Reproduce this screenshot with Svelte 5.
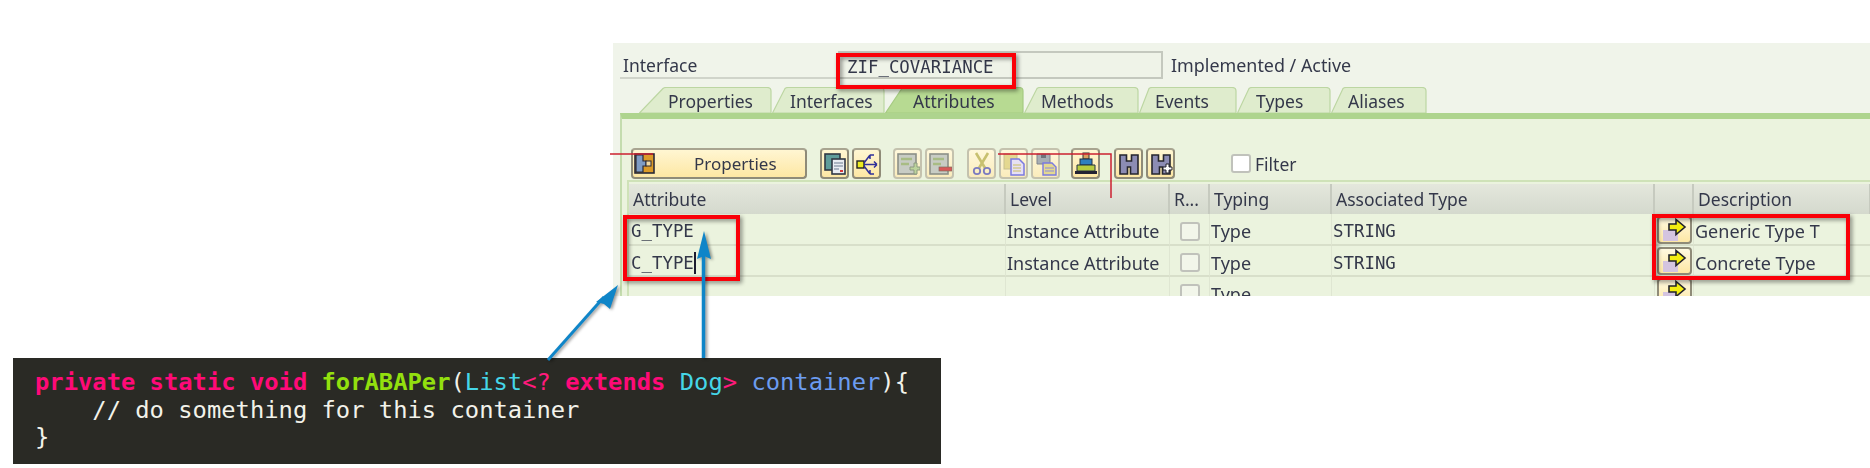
<script lang="ts">
  const tabs = [
    { label: "Properties", width: 133, slant: 24, pad: 29 },
    { label: "Interfaces", width: 113, slant: 13, pad: 18 },
    { label: "Attributes", width: 139, slant: 17, pad: 28, active: true },
    { label: "Methods", width: 115, slant: 13, pad: 17 },
    { label: "Events", width: 98, slant: 10, pad: 16 },
    { label: "Types", width: 94, slant: 12, pad: 19 },
    { label: "Aliases", width: 96, slant: 12, pad: 17 },
  ];

  const columns = ["Attribute", "Level", "R...", "Typing", "Associated Type", "", "Description"];

  const rows = [
    { name: "G_TYPE", level: "Instance Attribute", typing: "Type", assoc: "STRING", desc: "Generic Type T" },
    { name: "C_TYPE", level: "Instance Attribute", typing: "Type", assoc: "STRING", desc: "Concrete Type", cursor: true },
    { name: "", level: "", typing: "Type", assoc: "", desc: "" },
  ];

  const groups = [
    { icons: ["copy", "tree"], after: 12 },
    { icons: ["add", "remove"], after: 13, off: true },
    { icons: ["cut", "paste", "save"], after: 11, off: true },
    { icons: ["stack"], after: 14 },
    { icons: ["find", "findnext"], after: 0 },
  ];
</script>

<div class="stage">
  <section class="sap">
    <div class="head">
      <span class="head-label">Interface</span>
      <span class="field mono">ZIF_COVARIANCE</span>
      <span class="status">Implemented / Active</span>
    </div>

    <div class="tabs">
      {#each tabs as tab}
        <div class="tab" class:active={tab.active} style="width: {tab.width}px; padding-left: {tab.pad}px">
          <svg class="tab-bg" width={tab.width} height="26" aria-hidden="true">
            <path d="M0.5 26 L{tab.slant} 1.5 Q{tab.slant + 1} 0.5 {tab.slant + 3} 0.5 L{tab.width - 5} 0.5 Q{tab.width - 1} 0.5 {tab.width - 1} 4 L{tab.width - 1} 26 Z" />
          </svg>
          <span>{tab.label}</span>
        </div>
      {/each}
    </div>

    <div class="panel">
      <div class="toolbar">
        <button class="btn wide">
          <svg width="21" height="21" viewBox="0 0 21 21" aria-hidden="true">
            <rect x="1" y="1" width="19" height="19" fill="#dc9a28" stroke="#2a2a38" stroke-width="1.6" />
            <path d="M2 2h7v6h3v5H9v6H2z" fill="#7f9cc4" stroke="#2a2a38" stroke-width="1.2" />
            <rect x="12" y="8" width="5" height="5" fill="#f2d9a0" stroke="#2a2a38" />
          </svg>
          <span>Properties</span>
        </button>

        {#each groups as group}
          <div class="group" style="margin-right: {group.after}px">
            {#each group.icons as icon}
              <button class="btn icon" class:off={group.off}>
                <svg width="24" height="24" viewBox="0 0 24 24" aria-hidden="true">
                  {#if icon === "copy"}
                    <rect x="2" y="2" width="15" height="16" fill="#5f9c9a" stroke="#303844" stroke-width="1.6" />
                    <rect x="9" y="7" width="13" height="15" fill="#e8ecf2" stroke="#303844" stroke-width="1.6" />
                    <path d="M11 11h9M11 14h9M11 17h5" stroke="#6a7a90" />
                    <rect x="17" y="18" width="3" height="2" fill="#d8383a" />
                  {:else if icon === "tree"}
                    <rect x="2" y="9" width="7" height="7" fill="#ecec20" stroke="#222" stroke-width="1.4" />
                    <path d="M9 12.5H22M9 11L15 3M9 14l6 8M15 3h4M15 3v4M15 22h4M15 22v-4M22 12.5l-3-3M22 12.5l-3 3" fill="none" stroke="#30309a" stroke-width="1.5" />
                  {:else if icon === "add"}
                    <rect x="2" y="2" width="18" height="20" fill="#c8ccc4" stroke="#8c9088" stroke-width="1.6" />
                    <path d="M5 7h11M5 12h8" stroke="#a8bc84" stroke-width="2.5" />
                    <path d="M14 15h4v-4h3v4h3v3h-3v4h-3v-4h-4z" fill="#bcd49c" stroke="#8c9a80" />
                  {:else if icon === "remove"}
                    <rect x="2" y="2" width="18" height="20" fill="#c8ccc4" stroke="#8c9088" stroke-width="1.6" />
                    <path d="M5 7h11M5 12h8" stroke="#a8bc84" stroke-width="2.5" />
                    <rect x="11" y="15" width="13" height="4" fill="#d85858" stroke="#807060" stroke-width=".7" />
                  {:else if icon === "cut"}
                    <path d="M6 1l9 15M18 1L9 16" stroke="#c8c070" stroke-width="2.6" fill="none" />
                    <circle cx="7" cy="19" r="3.2" fill="none" stroke="#7c7cc0" stroke-width="1.8" />
                    <circle cx="17" cy="19" r="3.2" fill="none" stroke="#7c7cc0" stroke-width="1.8" />
                  {:else if icon === "paste"}
                    <rect x="2" y="2" width="13" height="15" fill="#e4d890" stroke="#c8c090" />
                    <path d="M9 7h8l5 5v11H9z" fill="#e6e0f4" stroke="#7a7ae0" stroke-width="1.5" />
                    <path d="M11 13h8M11 16h8M11 19h8" stroke="#c8bc60" />
                  {:else if icon === "save"}
                    <path d="M3 2h13v10H3z" fill="#a8aeb4" stroke="#80848c" />
                    <rect x="7" y="2" width="5" height="4" fill="#70747c" />
                    <path d="M9 11h9l4 4v8H9z" fill="#e4d890" stroke="#7a7ae0" stroke-width="1.4" />
                    <path d="M11 16h9M11 19h9" stroke="#8a8ae0" />
                  {:else if icon === "stack"}
                    <rect x="9" y="1" width="6" height="6" fill="#d8a060" stroke="#333" />
                    <rect x="6" y="7" width="12" height="6" fill="#2f7fc0" stroke="#234" />
                    <path d="M3 13h18v6H3z" fill="#b8cc40" stroke="#234" />
                    <rect x="1" y="19" width="22" height="3" fill="#223" />
                  {:else}
                    <path d="M3 3h6.5v6h5V3H21v19h-7.5v-7h-3v7H3z" fill="#8c8cb4" stroke="#26262e" stroke-width="1.6" />
                    {#if icon === "findnext"}
                      <path d="M14 15h3v-3h3v3h3v3h-3v3h-3v-3h-3z" fill="#fff" stroke="#22222c" />
                    {/if}
                  {/if}
                </svg>
              </button>
            {/each}
          </div>
        {/each}

        <label class="filter">
          <span class="check"></span>
          <span>Filter</span>
        </label>
      </div>

      <div class="table">
        {#each columns as col}
          <div class="th">{col}</div>
        {/each}
        {#each rows as row}
          <div class="td mono name">{row.name}{#if row.cursor}<i class="cursor"></i>{/if}</div>
          <div class="td">{row.level}</div>
          <div class="td"><span class="check"></span></div>
          <div class="td">{row.typing}</div>
          <div class="td mono">{row.assoc}</div>
          <div class="td cell-btn">
            <span class="nav">
              <svg width="31" height="25" viewBox="0 0 31 25" aria-hidden="true">
                <rect x="4" y="12" width="15" height="11" fill="#d4c4e0" />
                <path d="M10 6h7V1.500l9 7.500-9 7.500V12h-7z" fill="#f4ee10" stroke="#23232c" stroke-width="1.6" />
              </svg>
            </span>
          </div>
          <div class="td desc">{row.desc}</div>
        {/each}
      </div>
    </div>
  </section>

  <pre class="code"><b class="kw">private static void</b> <b class="fn">forABAPer</b>(<span class="ty">List</span><span class="op">&lt;?</span> <b class="kw">extends</b> <span class="ty">Dog</span><span class="op">&gt;</span> <span class="arg">container</span>){"{"}
    // do something for this container
{"}"}</pre>

  <svg class="marks" width="1870" height="468" aria-hidden="true">
    <path d="M610 154H653M998 154H1111V198" fill="none" stroke="#cc2030" stroke-width="1.5" />
    <g class="red-boxes">
      <rect x="838" y="55" width="176" height="32" />
      <rect x="625" y="217" width="113" height="62" />
      <rect x="1654" y="216" width="194" height="62" />
    </g>
    <g class="blue-arrows">
      <path d="M548 360L604 297" fill="none" stroke="#0f85c8" stroke-width="3" />
      <path d="M618 285L610 309L604 304L596 302Z" />
      <path d="M703.5 358V255" fill="none" stroke="#0f85c8" stroke-width="3.5" />
      <path d="M704 231L711 259L704 256L697 259Z" />
    </g>
  </svg>
</div>

<style>
  :global(body) {
    background: #fff;
  }

  .stage {
    position: relative;
    width: 1870px;
    height: 468px;
    overflow: hidden;
  }

  .sap {
    margin: 0 0 0 613px;
    padding-top: 43px;
    height: 296px;
    box-sizing: border-box;
    background: linear-gradient(#fff 43px, #f0f4ea 43px);
    overflow: hidden;
    color: #34384a;
    font: 17.5px "Noto Sans", sans-serif;
    filter: blur(0.45px);
  }

  .mono {
    font-family: "DejaVu Sans Mono", monospace;
    font-size: 17.4px;
  }

  .head {
    display: flex;
    align-items: stretch;
    height: 36px;
    margin-left: 7px;
  }

  .head-label {
    width: 218px;
    padding: 10px 0 0 3px;
    box-sizing: border-box;
    border-bottom: 2px solid #d0d4ca;
    line-height: 24px;
  }

  .field {
    width: 325px;
    margin-top: 8px;
    padding: 4px 0 0 7px;
    box-sizing: border-box;
    border: 2px solid #c4c8be;
    background: #eff3e8;
    line-height: 20px;
  }

  .status {
    margin-left: 8px;
    padding-top: 10px;
    font-size: 17.9px;
    line-height: 24px;
  }

  .tabs {
    display: flex;
    height: 26px;
    margin: 8px 0 0 26px;
  }

  .tab {
    position: relative;
    box-sizing: border-box;
    line-height: 29px;
  }

  .tab span {
    position: relative;
  }

  .tab-bg {
    position: absolute;
    left: 0;
    top: 0;
  }

  .tab-bg path {
    fill: #dfeccd;
    stroke: #bcd6a2;
    stroke-width: 1.2;
  }

  .tab.active .tab-bg path {
    fill: #b7da92;
    stroke: #a6cb82;
  }

  .panel {
    height: 183px;
    margin-left: 7px;
    box-sizing: border-box;
    border-top: 6px solid #aed48e;
    border-left: 2px solid #c4dcae;
    background: #ebf3de;
  }

  .toolbar {
    display: flex;
    align-items: flex-start;
    padding: 29px 0 0 9px;
  }

  .btn {
    display: flex;
    align-items: center;
    height: 31px;
    padding: 0;
    box-sizing: border-box;
    border: 2px solid #8f8b78;
    border-top-color: #a8a490;
    border-radius: 4px;
    background: linear-gradient(#fff6d2, #fde7a4);
    color: inherit;
    font: inherit;
  }

  .btn.off {
    border-color: #c4c2ae;
    background: linear-gradient(#fff8dc, #faecbc);
  }

  .btn.wide {
    width: 176px;
    padding-left: 1px;
    margin-right: 13px;
  }

  .btn.wide span {
    margin-left: 39px;
    font-size: 17px;
  }

  .btn.icon {
    width: 29px;
    justify-content: center;
  }

  .group {
    display: flex;
    gap: 3px;
  }

  .filter {
    display: flex;
    align-items: center;
    height: 31px;
    gap: 4px;
    margin-left: 56px;
  }

  .check {
    display: block;
    width: 20px;
    height: 19px;
    box-sizing: border-box;
    border: 2px solid #c0c2bb;
    border-radius: 3px;
    background: #f2f6ea;
  }

  .filter .check {
    background: #fff;
  }

  .table {
    display: grid;
    grid-template-columns: 377px 164px 40px 122px 323px 39px 177px;
    grid-template-rows: 30px 32px 31px 31px;
    margin: 1px 0 0 5px;
    padding-top: 2px;
    border-top: 2px solid #cfe2b8;
    border-left: 2px solid #cfe2b8;
  }

  .th {
    padding-left: 4px;
    border-right: 2px solid #c6cabf;
    background: linear-gradient(#e4e7dc, #d4d9cd);
    line-height: 31px;
    white-space: nowrap;
  }

  .td {
    display: flex;
    align-items: center;
    padding: 4px 0 0 1px;
    box-sizing: border-box;
    border-bottom: 2px solid #d8dfca;
    border-right: 1px solid #dfe6d2;
    font-size: 18px;
    white-space: nowrap;
  }

  .td.name {
    padding-left: 2px;
  }

  .td.mono {
    font-size: 17.4px;
  }

  .td .check {
    margin-left: 9px;
  }

  .td.cell-btn {
    padding: 1px 0 0;
    justify-content: center;
  }

  .nav {
    display: flex;
    width: 35px;
    height: 28px;
    box-sizing: border-box;
    border: 2px solid #8f8b78;
    border-radius: 4px;
    background: linear-gradient(#fff9e0, #fde7a4);
  }

  .td.desc {
    padding-left: 1px;
  }

  .cursor {
    display: block;
    width: 2px;
    height: 22px;
    background: #1c1c30;
  }

  .code {
    width: 928px;
    height: 106px;
    margin: 62px 0 0 13px;
    padding: 11px 0 0 22px;
    box-sizing: border-box;
    background: #2a2a25;
    color: #f2f2ea;
    font: 23.8px/27.7px "DejaVu Sans Mono", monospace;
  }

  .kw {
    color: #ff0a78;
  }

  .fn {
    color: #93e00e;
    font-weight: 600;
  }

  .ty {
    color: #45d6e8;
  }

  .op {
    color: #ff1a7c;
  }

  .arg {
    color: #6c9cf0;
  }

  .marks {
    position: absolute;
    left: 0;
    top: 0;
    pointer-events: none;
  }

  .red-boxes rect {
    fill: none;
    stroke: #fa0008;
    stroke-width: 4;
    filter: drop-shadow(2px 2px 2px rgba(0, 0, 0, 0.45));
  }

  .blue-arrows {
    fill: #0f85c8;
    filter: drop-shadow(2px 1px 1.5px rgba(0, 0, 0, 0.4));
  }
</style>
